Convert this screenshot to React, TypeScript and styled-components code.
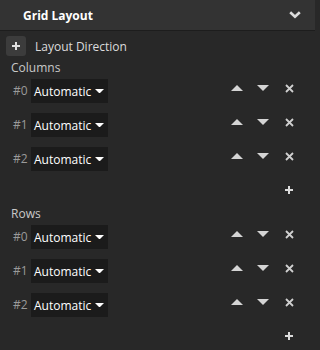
import React from 'react';
import styled, { createGlobalStyle } from 'styled-components';

const GlobalStyle = createGlobalStyle`
  html, body {
    margin: 0;
    padding: 0;
    background: #282828;
  }
  body {
    font-family: 'Open Sans', 'Noto Sans', sans-serif;
    font-size: 12px;
    color: #e6e6e6;
  }
`;

const Panel = styled.div`
  width: 315px;
  height: 350px;
  background: #282828;
`;

const Header = styled.div`
  height: 30px;
  background: #333333;
  border-bottom: 1px solid #1d1d1d;
  display: flex;
  align-items: center;
  justify-content: space-between;
  padding: 0 12px 0 23px;
`;

const Title = styled.span`
  font-weight: 700;
  font-size: 12px;
  color: #ffffff;
`;

const IconButton = styled.button`
  border: none;
  background: transparent;
  padding: 0;
  display: flex;
  align-items: center;
  justify-content: center;
  cursor: pointer;
  width: ${p => p.$size ?? 24}px;
  height: 18px;
  color: #d2d2d2;
`;

const DirectionRow = styled.div`
  display: flex;
  align-items: center;
  gap: 9px;
  margin-top: 5px;
  padding-left: 6px;
  height: 20px;
`;

const SquareButton = styled.button`
  width: 20px;
  height: 20px;
  border: none;
  border-radius: 3px;
  background: #3c3c3c;
  padding: 0;
  display: flex;
  align-items: center;
  justify-content: center;
  cursor: pointer;
`;

const RowLabel = styled.span`
  color: #dcdcdc;
`;

const SectionLabel = styled.div`
  height: 16px;
  line-height: 16px;
  padding-left: 11px;
  margin-top: ${p => p.$top}px;
  color: #c8c8c8;
`;

const TrackList = styled.div`
  display: flex;
  flex-direction: column;
  gap: 10px;
  margin-top: 3px;
`;

const TrackRow = styled.div`
  display: flex;
  align-items: flex-start;
  height: 24px;
  padding: 0 14px 0 13px;
`;

const IndexLabel = styled.span`
  width: 18px;
  line-height: 24px;
  color: #9a9a9a;
`;

const Dropdown = styled.div`
  width: 77px;
  height: 24px;
  box-sizing: border-box;
  background: #1b1b1b;
  display: flex;
  align-items: center;
  justify-content: space-between;
  padding: 0 4px 0 3px;
  color: #ffffff;
  cursor: pointer;
`;

const Controls = styled.div`
  margin-left: auto;
  display: flex;
  gap: 2px;
  margin-top: 0px;
`;

const AddRow = styled.div`
  display: flex;
  justify-content: flex-end;
  align-items: center;
  height: 20px;
  margin-top: 9px;
  padding-right: 14px;
`;

const Chevron = () => (
  <svg width="12" height="8" viewBox="0 0 12 8">
    <path d="M1.2 1.2 L6 5.8 L10.8 1.2" fill="none" stroke="#dcdcdc" strokeWidth="2.6" />
  </svg>
);

const Plus = ({ color = '#dcdcdc' }: { color?: string }) => (
  <svg width="8" height="8" viewBox="0 0 8 8">
    <rect x="3" y="0" width="2" height="8" fill={color} />
    <rect x="0" y="3" width="8" height="2" fill={color} />
  </svg>
);

const Triangle = ({ up, width = 12, color = '#d4d4d4' }: { up?: boolean; width?: number; color?: string }) => (
  <svg width={width} height={width / 2} viewBox={`0 0 ${width} ${width / 2}`}>
    <polygon
      points={up ? `0,${width / 2} ${width / 2},0 ${width},${width / 2}` : `0,0 ${width},0 ${width / 2},${width / 2}`}
      fill={color}
    />
  </svg>
);

const Cross = () => (
  <svg width="9" height="9" viewBox="0 0 9 9">
    <path d="M1 1 L8 8 M8 1 L1 8" stroke="#d0d0d0" strokeWidth="1.8" />
  </svg>
);

const Track: React.FC<{ index: number }> = ({ index }) => (
  <TrackRow>
    <IndexLabel>#{index}</IndexLabel>
    <Dropdown>
      <span>Automatic</span>
      <Triangle width={9} color="#ffffff" />
    </Dropdown>
    <Controls>
      <IconButton>
        <Triangle up />
      </IconButton>
      <IconButton>
        <Triangle />
      </IconButton>
      <IconButton>
        <Cross />
      </IconButton>
    </Controls>
  </TrackRow>
);

const Section: React.FC<{ label: string; top: number }> = ({ label, top }) => (
  <>
    <SectionLabel $top={top}>{label}</SectionLabel>
    <TrackList>
      {[0, 1, 2].map(i => (
        <Track key={i} index={i} />
      ))}
    </TrackList>
    <AddRow>
      <IconButton>
        <Plus />
      </IconButton>
    </AddRow>
  </>
);

export default function App() {
  return (
    <Panel>
      <GlobalStyle />
      <Header>
        <Title>Grid Layout</Title>
        <IconButton $size={16}>
          <Chevron />
        </IconButton>
      </Header>
      <DirectionRow>
        <SquareButton>
          <Plus color="#e0e0e0" />
        </SquareButton>
        <RowLabel>Layout Direction</RowLabel>
      </DirectionRow>
      <Section label="Columns" top={4} />
      <Section label="Rows" top={6} />
    </Panel>
  );
}
